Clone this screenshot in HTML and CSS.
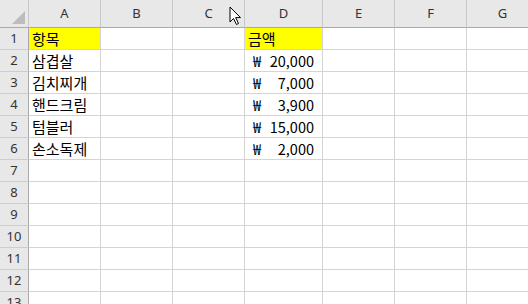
FILE: index.html
```html
<!DOCTYPE html>
<html lang="ko">
<head>
  <meta charset="UTF-8">
  <title>항목 금액</title>
  <link rel="stylesheet" href="styles.css">
</head>
<body>
  <div class="sheet">
    <div class="row head">
      <div class="corner">
        <svg width="13" height="13" viewBox="0 0 13 13"><polygon points="13,0 13,13 0,13" fill="#bcbcbc"/></svg>
      </div>
      <div class="ch">A</div><div class="ch">B</div><div class="ch">C</div><div class="ch">D</div><div class="ch">E</div><div class="ch">F</div><div class="ch">G</div>
    </div>

    <div class="row">
      <div class="rh">1</div>
      <div class="cell fill">항목</div><div class="cell"></div><div class="cell"></div>
      <div class="cell fill">금액</div><div class="cell"></div><div class="cell"></div><div class="cell"></div>
    </div>
    <div class="row">
      <div class="rh">2</div>
      <div class="cell">삼겹살</div><div class="cell"></div><div class="cell"></div>
      <div class="cell money"><span>₩</span><span>20,000</span></div><div class="cell"></div><div class="cell"></div><div class="cell"></div>
    </div>
    <div class="row">
      <div class="rh">3</div>
      <div class="cell">김치찌개</div><div class="cell"></div><div class="cell"></div>
      <div class="cell money"><span>₩</span><span>7,000</span></div><div class="cell"></div><div class="cell"></div><div class="cell"></div>
    </div>
    <div class="row">
      <div class="rh">4</div>
      <div class="cell">핸드크림</div><div class="cell"></div><div class="cell"></div>
      <div class="cell money"><span>₩</span><span>3,900</span></div><div class="cell"></div><div class="cell"></div><div class="cell"></div>
    </div>
    <div class="row">
      <div class="rh">5</div>
      <div class="cell">텀블러</div><div class="cell"></div><div class="cell"></div>
      <div class="cell money"><span>₩</span><span>15,000</span></div><div class="cell"></div><div class="cell"></div><div class="cell"></div>
    </div>
    <div class="row">
      <div class="rh">6</div>
      <div class="cell">손소독제</div><div class="cell"></div><div class="cell"></div>
      <div class="cell money"><span>₩</span><span>2,000</span></div><div class="cell"></div><div class="cell"></div><div class="cell"></div>
    </div>
    <div class="row">
      <div class="rh">7</div>
      <div class="cell"></div><div class="cell"></div><div class="cell"></div><div class="cell"></div><div class="cell"></div><div class="cell"></div><div class="cell"></div>
    </div>
    <div class="row">
      <div class="rh">8</div>
      <div class="cell"></div><div class="cell"></div><div class="cell"></div><div class="cell"></div><div class="cell"></div><div class="cell"></div><div class="cell"></div>
    </div>
    <div class="row">
      <div class="rh">9</div>
      <div class="cell"></div><div class="cell"></div><div class="cell"></div><div class="cell"></div><div class="cell"></div><div class="cell"></div><div class="cell"></div>
    </div>
    <div class="row">
      <div class="rh">10</div>
      <div class="cell"></div><div class="cell"></div><div class="cell"></div><div class="cell"></div><div class="cell"></div><div class="cell"></div><div class="cell"></div>
    </div>
    <div class="row">
      <div class="rh">11</div>
      <div class="cell"></div><div class="cell"></div><div class="cell"></div><div class="cell"></div><div class="cell"></div><div class="cell"></div><div class="cell"></div>
    </div>
    <div class="row">
      <div class="rh">12</div>
      <div class="cell"></div><div class="cell"></div><div class="cell"></div><div class="cell"></div><div class="cell"></div><div class="cell"></div><div class="cell"></div>
    </div>
    <div class="row">
      <div class="rh">13</div>
      <div class="cell"></div><div class="cell"></div><div class="cell"></div><div class="cell"></div><div class="cell"></div><div class="cell"></div><div class="cell"></div>
    </div>
  </div>

  <!-- mouse pointer over the column header -->
  <svg class="pointer" width="14" height="20" viewBox="0 0 14 20">
    <path d="M1 1 L1 16 L4.5 12.5 L7.5 18.5 L9.5 17.5 L6.7 11.6 L11.5 11.6 Z" fill="#fff" stroke="#000" stroke-width="1" stroke-linejoin="round"/>
  </svg>
</body>
</html>
```

FILE: styles.css
```css
body {
  margin: 0;
  background: #fff;
  overflow: hidden;
  position: relative;
}

.sheet {
  width: 540px;
}

.row {
  display: grid;
  grid-template-columns: 29px 72px 72px 72px 78px 72px 72px 72px;
  height: 22px;
}

.row.head {
  height: 28px;
}

.corner,
.ch,
.rh,
.cell {
  box-sizing: border-box;
  border-right: 1px solid #d4d4d4;
  border-bottom: 1px solid #d4d4d4;
  overflow: hidden;
  white-space: nowrap;
}

.corner {
  background: #e8e8e8;
  border-right-color: #c8c8c8;
  border-bottom-color: #a9a9a9;
  display: flex;
  align-items: flex-end;
  justify-content: flex-end;
  padding: 0 3px 3px 0;
}

.ch {
  background: #e8e8e8;
  border-right-color: #c8c8c8;
  border-bottom-color: #a9a9a9;
  font: 13px "Noto Sans", sans-serif;
  color: #333;
  text-align: center;
  line-height: 27px;
}

.rh {
  background: #e8e8e8;
  border-right-color: #a9a9a9;
  border-bottom-color: #cdcdcd;
  font: 13px "Noto Sans", sans-serif;
  color: #333;
  text-align: center;
  line-height: 21px;
}

.cell {
  font: 15px "Noto Sans CJK KR", sans-serif;
  color: #000;
  line-height: 21px;
  padding: 0 3px;
}

.fill {
  background: #ffff00;
}

.money {
  display: flex;
  justify-content: space-between;
  padding: 0 8px 0 8px;
  font-size: 14.5px;
}

.pointer {
  position: absolute;
  left: 229px;
  top: 6px;
}
```
